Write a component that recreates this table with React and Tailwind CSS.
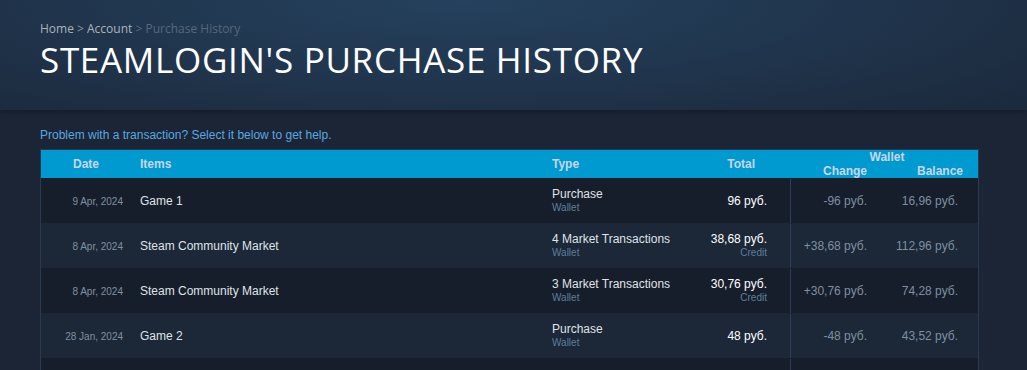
import React from 'react';

const rows = [
  { date: '9 Apr, 2024', item: 'Game 1', type: 'Purchase', total: '96 руб.', credit: false, change: '-96 руб.', balance: '16,96 руб.' },
  { date: '8 Apr, 2024', item: 'Steam Community Market', type: '4 Market Transactions', total: '38,68 руб.', credit: true, change: '+38,68 руб.', balance: '112,96 руб.' },
  { date: '8 Apr, 2024', item: 'Steam Community Market', type: '3 Market Transactions', total: '30,76 руб.', credit: true, change: '+30,76 руб.', balance: '74,28 руб.' },
  { date: '28 Jan, 2024', item: 'Game 2', type: 'Purchase', total: '48 руб.', credit: false, change: '-48 руб.', balance: '43,52 руб.' },
  { date: '', item: '', type: '', total: '', credit: false, change: '', balance: '' },
];

export default function App() {
  return (
    <div className="h-[370px] bg-[#1b2536] font-['Liberation_Sans',Arial,sans-serif] overflow-hidden">
      {/* Page header */}
      <div className="h-[110px] bg-[radial-gradient(ellipse_70%_140%_at_45%_0%,#25415d_0%,#213750_45%,#1c2a3d_100%)] shadow-[0_2px_6px_rgba(0,0,0,0.25)] px-10 pt-[22px]">
        <div className="text-[12px] font-['Open_Sans',sans-serif] text-[#8f98a0] leading-[14px]">
          <span className="text-[#acb2b8]">Home</span> &gt; <span className="text-[#acb2b8]">Account</span>{' '}
          <span className="text-[#56687b]">&gt; Purchase History</span>
        </div>
        <h1 className="text-[35px] leading-[48px] font-['Open_Sans',sans-serif] font-normal tracking-[0.02em] text-white">
          STEAMLOGIN'S PURCHASE HISTORY
        </h1>
      </div>

      <div className="px-10 pt-[17px]">
        <div className="text-[12px] leading-4 text-[#58a8e0]">Problem with a transaction? Select it below to get help.</div>

        <div className="mt-[6px] w-[939px] border-x border-t border-[#2a3a52]">
          {/* Table head */}
          <div className="flex h-[28px] bg-[#0099d0] text-[12px] font-bold text-[#c7d7e6]">
            <div className="w-[90px] text-center self-center">Date</div>
            <div className="w-[412px] pl-[9px] self-center">Items</div>
            <div className="w-[137px] pl-[9px] self-center">Type</div>
            <div className="w-[110px] text-right pr-[35px] self-center">Total</div>
            <div className="flex-1 flex flex-col leading-[14px]">
              <div className="text-center pl-[6px]">Wallet</div>
              <div className="flex">
                <div className="w-[89px] text-right pr-[12px]">Change</div>
                <div className="flex-1 text-right pr-[15px]">Balance</div>
              </div>
            </div>
          </div>

          {rows.map((r, i) => (
            <div key={i} className={`flex h-[45px] items-stretch pt-px ${i % 2 === 0 ? 'bg-[#171e2b]' : 'bg-[#1c2738]'}`}>
              <div className="w-[90px] text-right pr-[8px] self-center text-[10px] text-[#7f90a2]">{r.date}</div>
              <div className="w-[412px] pl-[9px] self-center text-[12px] text-[#dfe3e6]">{r.item}</div>
              <div className="w-[137px] pl-[9px] self-center leading-[13px]">
                <div className="text-[12px] text-[#dfe3e6]">{r.type}</div>
                {r.type && <div className="text-[10px] text-[#5c7e9e]">Wallet</div>}
              </div>
              <div className="w-[110px] text-right pr-[23px] self-center leading-[13px]">
                <div className="text-[12px] text-white">{r.total}</div>
                {r.credit && <div className="text-[10px] text-[#5c7e9e]">Credit</div>}
              </div>
              <div className="w-[89px] border-l border-[#2e3f57] text-right pr-[12px] flex items-center justify-end text-[12px] text-[#7d8fa1]">
                {r.change}
              </div>
              <div className="flex-1 text-right pr-[20px] flex items-center justify-end text-[12px] text-[#7d8fa1]">
                {r.balance}
              </div>
            </div>
          ))}
        </div>
      </div>
    </div>
  );
}
